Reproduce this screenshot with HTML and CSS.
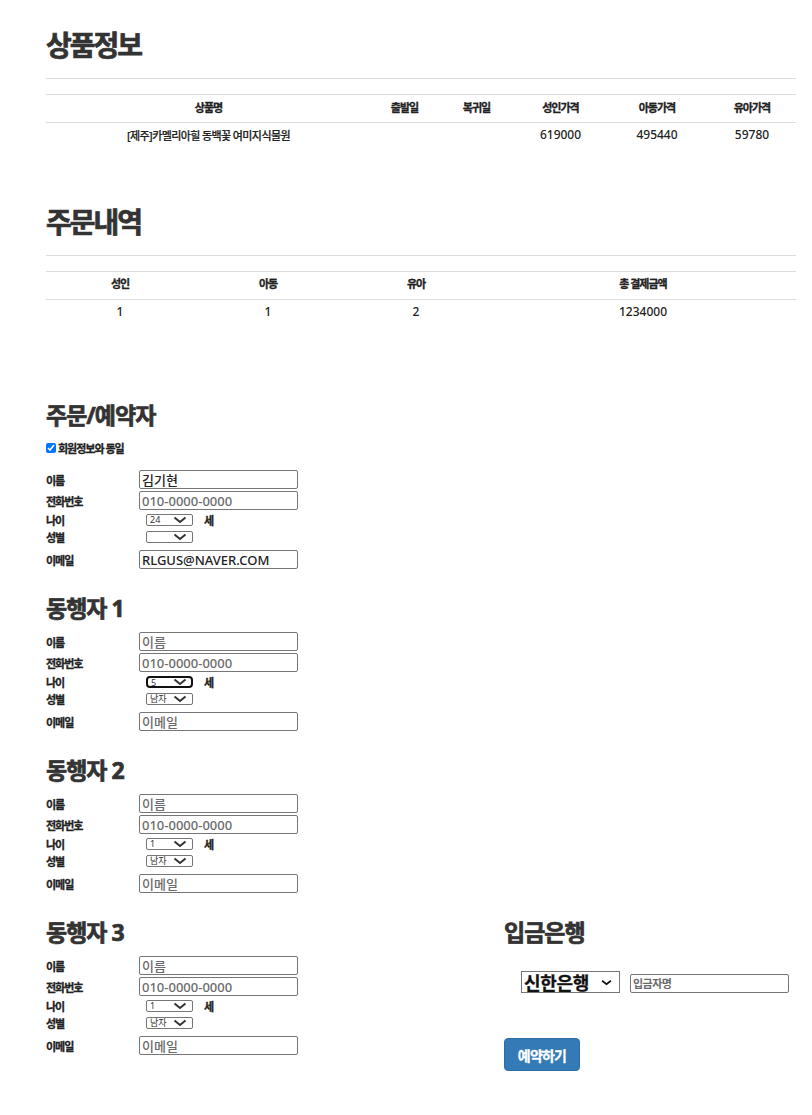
FILE: index.html
```html
<!DOCTYPE html>
<html lang="ko">
<head>
<meta charset="utf-8">
<title>예약</title>
<link rel="stylesheet" href="styles.css">
</head>
<body>
<div class="page">
  <section class="sec sec-product">
    <h2 class="title title-lg">상품정보</h2>
    <hr class="rule">
    <table class="tbl tbl-product">
      <thead>
        <tr><th>상품명</th><th>출발일</th><th>복귀일</th><th>성인가격</th><th>아동가격</th><th>유아가격</th></tr>
      </thead>
      <tbody>
        <tr><td class="name">[제주]카멜리아힐 동백꽃 여미지식물원</td><td></td><td></td><td>619000</td><td>495440</td><td>59780</td></tr>
      </tbody>
    </table>
  </section>

  <section class="sec sec-order">
    <h2 class="title title-lg">주문내역</h2>
    <hr class="rule">
    <table class="tbl tbl-order">
      <thead>
        <tr><th>성인</th><th>아동</th><th>유아</th><th>총 결제금액</th></tr>
      </thead>
      <tbody>
        <tr><td>1</td><td>1</td><td>2</td><td>1234000</td></tr>
      </tbody>
    </table>
  </section>

  <section class="person person-main">
    <h3 class="title title-md">주문/예약자</h3>
    <label class="same"><input type="checkbox" class="chk" checked><span>회원정보와 동일</span></label>
    <div class="fields">
      <div class="row"><span class="lbl">이름</span><input class="txt" value="김기현"></div>
      <div class="row"><span class="lbl">전화번호</span><input class="txt" placeholder="010-0000-0000"></div>
      <div class="row row-sel"><span class="lbl">나이</span><span class="sel"><select><option>24</option></select><svg class="chev" viewBox="0 0 14 8"><path d="M1.5 1.5 L7 6 L12.5 1.5"/></svg></span><span class="unit">세</span></div>
      <div class="row row-sel"><span class="lbl">성별</span><span class="sel"><select><option></option></select><svg class="chev" viewBox="0 0 14 8"><path d="M1.5 1.5 L7 6 L12.5 1.5"/></svg></span></div>
      <div class="row row-mail"><span class="lbl">이메일</span><input class="txt" value="RLGUS@NAVER.COM"></div>
    </div>
  </section>

  <section class="person">
    <h3 class="title title-md">동행자 1</h3>
    <div class="fields">
      <div class="row"><span class="lbl">이름</span><input class="txt" placeholder="이름"></div>
      <div class="row"><span class="lbl">전화번호</span><input class="txt" placeholder="010-0000-0000"></div>
      <div class="row row-sel"><span class="lbl">나이</span><span class="sel sel-focus"><select><option>5</option></select><svg class="chev" viewBox="0 0 14 8"><path d="M1.5 1.5 L7 6 L12.5 1.5"/></svg></span><span class="unit">세</span></div>
      <div class="row row-sel"><span class="lbl">성별</span><span class="sel"><select><option>남자</option></select><svg class="chev" viewBox="0 0 14 8"><path d="M1.5 1.5 L7 6 L12.5 1.5"/></svg></span></div>
      <div class="row row-mail"><span class="lbl">이메일</span><input class="txt" placeholder="이메일"></div>
    </div>
  </section>

  <section class="person">
    <h3 class="title title-md">동행자 2</h3>
    <div class="fields">
      <div class="row"><span class="lbl">이름</span><input class="txt" placeholder="이름"></div>
      <div class="row"><span class="lbl">전화번호</span><input class="txt" placeholder="010-0000-0000"></div>
      <div class="row row-sel"><span class="lbl">나이</span><span class="sel"><select><option>1</option></select><svg class="chev" viewBox="0 0 14 8"><path d="M1.5 1.5 L7 6 L12.5 1.5"/></svg></span><span class="unit">세</span></div>
      <div class="row row-sel"><span class="lbl">성별</span><span class="sel"><select><option>남자</option></select><svg class="chev" viewBox="0 0 14 8"><path d="M1.5 1.5 L7 6 L12.5 1.5"/></svg></span></div>
      <div class="row row-mail"><span class="lbl">이메일</span><input class="txt" placeholder="이메일"></div>
    </div>
  </section>

  <div class="bottom">
    <section class="person col-left">
      <h3 class="title title-md">동행자 3</h3>
      <div class="fields">
        <div class="row"><span class="lbl">이름</span><input class="txt" placeholder="이름"></div>
        <div class="row"><span class="lbl">전화번호</span><input class="txt" placeholder="010-0000-0000"></div>
        <div class="row row-sel"><span class="lbl">나이</span><span class="sel"><select><option>1</option></select><svg class="chev" viewBox="0 0 14 8"><path d="M1.5 1.5 L7 6 L12.5 1.5"/></svg></span><span class="unit">세</span></div>
        <div class="row row-sel"><span class="lbl">성별</span><span class="sel"><select><option>남자</option></select><svg class="chev" viewBox="0 0 14 8"><path d="M1.5 1.5 L7 6 L12.5 1.5"/></svg></span></div>
        <div class="row row-mail"><span class="lbl">이메일</span><input class="txt" placeholder="이메일"></div>
      </div>
    </section>
    <section class="col-right">
      <h3 class="title title-md">입금은행</h3>
      <div class="bank">
        <span class="sel sel-bank"><select><option>신한은행</option></select><svg class="chev" viewBox="0 0 14 8"><path d="M2 2 L7 6 L12 2"/></svg></span>
        <input class="txt txt-depositor" placeholder="입금자명">
      </div>
      <button class="btn" type="button">예약하기</button>
    </section>
  </div>
</div>
</body>
</html>
```

FILE: styles.css
```css
* { box-sizing: border-box; }

body {
  margin: 0;
  background: #fff;
  color: #333;
  font-family: "Noto Sans", "Noto Sans CJK KR", sans-serif;
}

.page {
  width: 796px;
  padding: 0 0 40px 46px;
}

.title {
  margin: 0;
  font-weight: 700;
  color: #333;
  -webkit-text-stroke: 0.7px #333;
}

.title-lg {
  font-size: 28px;
  line-height: 34px;
  letter-spacing: -2px;
}

.title-md {
  font-size: 23px;
  line-height: 28px;
  letter-spacing: -1px;
}

.sec-product .title { margin-top: 28px; }
.sec-order .title { margin-top: 56px; }

.rule {
  border: 0;
  border-top: 1px solid #ddd;
  margin: 16px 0 15px;
  height: 0;
}

.tbl {
  width: 750px;
  border-collapse: collapse;
  table-layout: fixed;
}

.tbl th {
  height: 28px;
  padding: 0 0 4px;
  font-size: 11px;
  font-weight: 700;
  letter-spacing: -1px;
  text-align: center;
  vertical-align: middle;
  border-top: 1px solid #ddd;
  border-bottom: 1px solid #ddd;
  color: #222;
  -webkit-text-stroke: 0.3px #222;
}

.tbl td {
  height: 26px;
  padding: 0 0 2px;
  font-size: 12px;
  font-weight: 500;
  text-align: center;
  vertical-align: middle;
  color: #222;
}

.tbl td.name {
  font-size: 11px;
  letter-spacing: -0.6px;
  -webkit-text-stroke: 0.2px #222;
}

.tbl-product th:nth-child(1) { width: 325px; }
.tbl-product th:nth-child(2) { width: 67px; }
.tbl-product th:nth-child(3) { width: 77px; }
.tbl-product th:nth-child(4) { width: 91px; }
.tbl-product th:nth-child(5) { width: 102px; }
.tbl-product th:nth-child(6) { width: 88px; }

.tbl-order th:nth-child(1),
.tbl-order th:nth-child(2),
.tbl-order th:nth-child(3) { width: 148px; }

.person .title { margin-top: 24px; }
.person .fields { margin-top: 9px; }

.person-main .title { margin-top: 76px; }
.person-main .fields { margin-top: 13px; }

.same {
  display: flex;
  align-items: center;
  height: 16px;
  margin-top: 11px;
  font-size: 11px;
  font-weight: 700;
  letter-spacing: -1px;
  color: #222;
  -webkit-text-stroke: 0.3px #222;
}

.chk {
  width: 10px;
  height: 10px;
  margin: 0 2px 0 0;
}

.row {
  display: flex;
  align-items: center;
  height: 21px;
}

.row-sel { height: 17px; }
.row-mail { margin-top: 4px; }

.lbl {
  width: 93px;
  font-size: 11px;
  font-weight: 700;
  letter-spacing: -1px;
  color: #222;
  -webkit-text-stroke: 0.3px #222;
}

.txt {
  width: 159px;
  height: 19px;
  margin: 0;
  padding: 0 2px;
  border: 1px solid #767676;
  border-radius: 2px;
  font-family: "Noto Sans", "Noto Sans CJK KR", sans-serif;
  font-size: 13px;
  font-weight: 500;
  color: #222;
  background: #fff;
}

.txt::placeholder { color: #6b6b6b; }

.sel {
  position: relative;
  display: inline-block;
  width: 47px;
  height: 12px;
  margin-left: 7px;
}

.sel select {
  -webkit-appearance: none;
  appearance: none;
  display: block;
  width: 100%;
  height: 100%;
  margin: 0;
  padding: 0 0 0 3px;
  border: 1px solid #767676;
  border-radius: 2px;
  background: #fff;
  font-family: "Noto Sans", "Noto Sans CJK KR", sans-serif;
  font-size: 9px;
  line-height: 10px;
  color: #333;
}

.sel-focus select {
  border: 2px solid #111;
  border-radius: 4px;
}

.chev {
  position: absolute;
  right: 6px;
  top: 2px;
  width: 14px;
  height: 8px;
  fill: none;
  stroke: #333;
  stroke-width: 2;
  pointer-events: none;
}

.unit {
  margin-left: 11px;
  font-size: 11px;
  font-weight: 700;
  color: #222;
  -webkit-text-stroke: 0.3px #222;
}

.bottom {
  display: flex;
  align-items: flex-start;
}

.col-left { width: 458px; }

.col-right .title { margin-top: 24px; }

.bank {
  display: flex;
  align-items: flex-end;
  margin-top: 25px;
}

.sel-bank {
  width: 99px;
  height: 22px;
  margin-left: 17px;
}

.sel-bank select {
  border-radius: 0;
  padding-left: 2px;
  font-family: "Noto Sans CJK KR", sans-serif;
  font-size: 18px;
  font-weight: 700;
  line-height: 20px;
  letter-spacing: -0.3px;
  color: #111;
  -webkit-text-stroke: 0.3px #111;
}

.sel-bank .chev {
  top: 8px;
  right: 7px;
  width: 13px;
  height: 7px;
  stroke: #111;
}

.txt-depositor {
  margin-left: 10px;
  font-size: 11px;
  font-weight: 700;
  letter-spacing: -0.5px;
}

.btn {
  display: block;
  width: 76px;
  height: 33px;
  margin-top: 45px;
  padding: 0;
  border: 1px solid #2e6da4;
  border-radius: 4px;
  background: #337ab7;
  color: #fff;
  font-family: "Noto Sans CJK KR", sans-serif;
  font-size: 14px;
  font-weight: 700;
  letter-spacing: -0.8px;
  -webkit-text-stroke: 0.3px #fff;
}
```
